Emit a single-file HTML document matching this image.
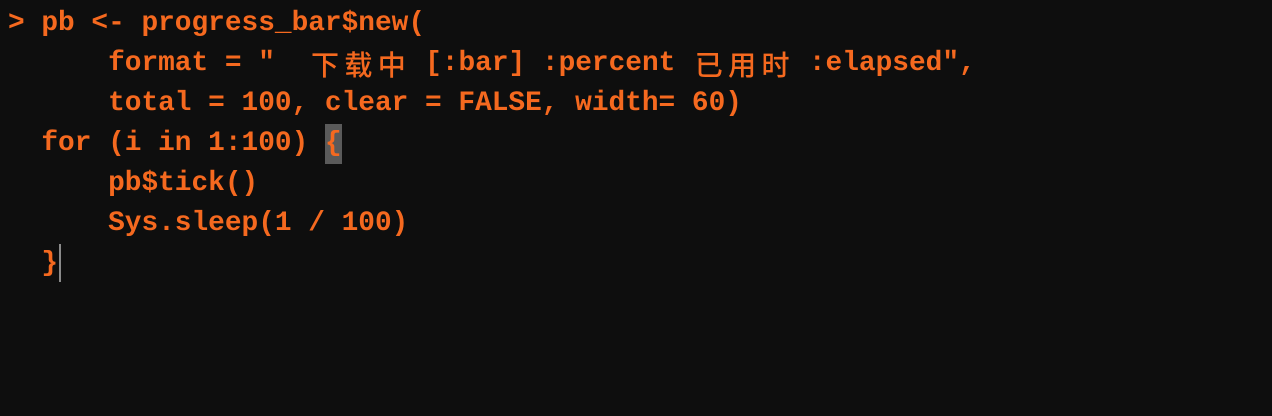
<!DOCTYPE html>
<html><head><meta charset="utf-8"><style>
html,body{margin:0;padding:0;background:#0e0e0e;width:1272px;height:416px;overflow:hidden}
.t{position:absolute;left:8px;top:4px;font-family:"Liberation Mono","Noto Sans CJK SC",monospace;font-size:27.8px;font-weight:bold;line-height:40px;color:#f5691f;white-space:pre}
.c{display:inline-block;width:33.4px;text-align:center;font-family:"Noto Sans CJK SC",sans-serif;font-size:28px;font-weight:500;line-height:40px;vertical-align:top}
.hl{background:#5a5a5a;display:inline-block;height:40px;vertical-align:top}
.cur{display:inline-block;width:2px;height:38px;background:#8a8a8a;vertical-align:top;margin-left:1px}
</style></head><body>
<div class="t">&gt; pb &lt;- progress_bar$new(
      format = "  <span class="c">下</span><span class="c">载</span><span class="c">中</span> [:bar] :percent <span class="c">已</span><span class="c">用</span><span class="c">时</span> :elapsed",
      total = 100, clear = FALSE, width= 60)
  for (i in 1:100) <span class="hl">{</span>
      pb$tick()
      Sys.sleep(1 / 100)
  }<span class="cur"></span></div>
</body></html>
